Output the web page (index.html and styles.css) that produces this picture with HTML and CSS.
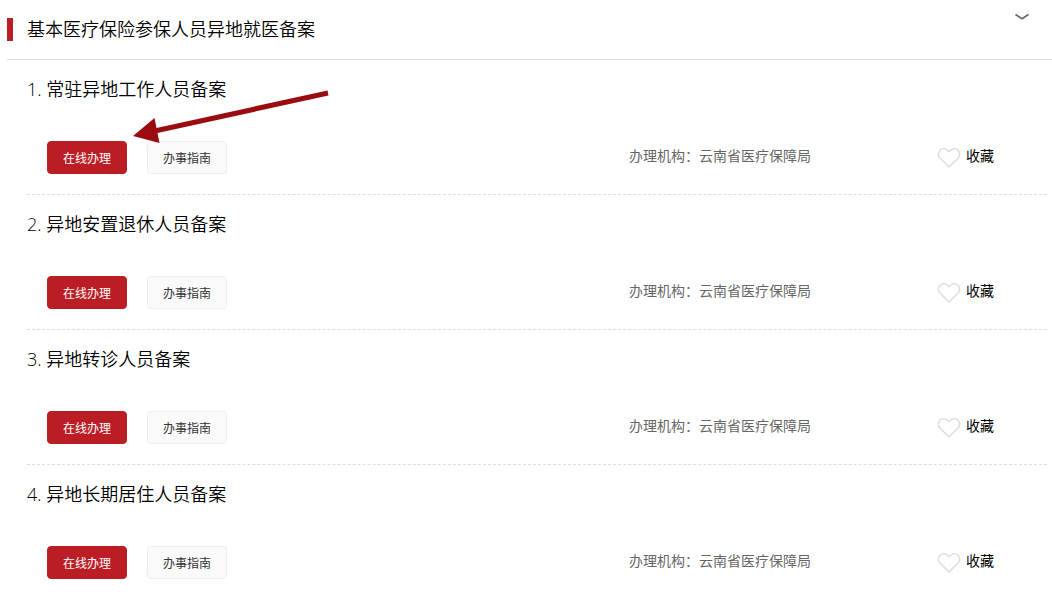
FILE: index.html
```html
<!DOCTYPE html>
<html lang="zh-CN">
<head>
	<meta charset="utf-8">
	<title>基本医疗保险参保人员异地就医备案</title>
	<link rel="stylesheet" href="styles.css">
</head>
<body>
	<div class="panel">
		<div class="head">
			<h2 class="title">基本医疗保险参保人员异地就医备案</h2>
			<button class="toggle" type="button" aria-label="收起">
				<svg width="16" height="8" viewBox="0 0 16 8"><path d="M1.5 1.5 L8 5.800 L14.5 1.5" fill="none" stroke="#666" stroke-width="1.700"/></svg>
			</button>
		</div>

		<div class="list">
			<div class="item">
				<h3 class="name">1. 常驻异地工作人员备案</h3>
				<div class="row">
					<div class="btns">
						<button class="btn primary" type="button">在线办理</button>
						<button class="btn" type="button">办事指南</button>
					</div>
					<div class="org">办理机构：云南省医疗保障局</div>
					<button class="fav" type="button">
						<svg class="heart" width="24" height="22" viewBox="0 0 24 22"><path d="M12 20 L3 11 C1 9 .8 5.500 2.800 3.400 C5 1.200 8.500 1.300 10.500 3.300 L12 4.800 L13.500 3.300 C15.500 1.300 19 1.200 21.200 3.400 C23.200 5.500 23 9 21 11 Z"/></svg>
						<span>收藏</span>
					</button>
				</div>
				<!-- 指向在线办理的箭头 -->
				<svg class="arrow" width="196" height="56" viewBox="0 0 196 56"><path d="M0 46 L21.500 28 L23.500 38 L194.500 0.500 L195.500 5.500 L24.500 43 L26.500 53 Z" fill="#9a0c0f"/></svg>
			</div>

			<div class="item">
				<h3 class="name">2. 异地安置退休人员备案</h3>
				<div class="row">
					<div class="btns">
						<button class="btn primary" type="button">在线办理</button>
						<button class="btn" type="button">办事指南</button>
					</div>
					<div class="org">办理机构：云南省医疗保障局</div>
					<button class="fav" type="button">
						<svg class="heart" width="24" height="22" viewBox="0 0 24 22"><path d="M12 20 L3 11 C1 9 .8 5.500 2.800 3.400 C5 1.200 8.500 1.300 10.500 3.300 L12 4.800 L13.500 3.300 C15.500 1.300 19 1.200 21.200 3.400 C23.200 5.500 23 9 21 11 Z"/></svg>
						<span>收藏</span>
					</button>
				</div>
			</div>

			<div class="item">
				<h3 class="name">3. 异地转诊人员备案</h3>
				<div class="row">
					<div class="btns">
						<button class="btn primary" type="button">在线办理</button>
						<button class="btn" type="button">办事指南</button>
					</div>
					<div class="org">办理机构：云南省医疗保障局</div>
					<button class="fav" type="button">
						<svg class="heart" width="24" height="22" viewBox="0 0 24 22"><path d="M12 20 L3 11 C1 9 .8 5.500 2.800 3.400 C5 1.200 8.500 1.300 10.500 3.300 L12 4.800 L13.500 3.300 C15.500 1.300 19 1.200 21.200 3.400 C23.200 5.500 23 9 21 11 Z"/></svg>
						<span>收藏</span>
					</button>
				</div>
			</div>

			<div class="item">
				<h3 class="name">4. 异地长期居住人员备案</h3>
				<div class="row">
					<div class="btns">
						<button class="btn primary" type="button">在线办理</button>
						<button class="btn" type="button">办事指南</button>
					</div>
					<div class="org">办理机构：云南省医疗保障局</div>
					<button class="fav" type="button">
						<svg class="heart" width="24" height="22" viewBox="0 0 24 22"><path d="M12 20 L3 11 C1 9 .8 5.500 2.800 3.400 C5 1.200 8.500 1.300 10.500 3.300 L12 4.800 L13.500 3.300 C15.500 1.300 19 1.200 21.200 3.400 C23.200 5.500 23 9 21 11 Z"/></svg>
						<span>收藏</span>
					</button>
				</div>
			</div>
		</div>
	</div>
</body>
</html>
```

FILE: styles.css
```css
body{
	margin: 0;
	color: #000;
	background: #fff;
	font-family: "Open Sans", "Noto Sans CJK SC", sans-serif;
	font-size: 14px;
}
button{
	margin: 0;
	padding: 0;
	border: 0;
	background: none;
	color: inherit;
	font: inherit;
	cursor: pointer;
}
svg{
	display: block;
}
.panel{
	padding-left: 7px;
}

.head{
	display: flex;
	justify-content: space-between;
	align-items: flex-start;
	padding: 13px 22px 11px 0;
	border-bottom: 1px solid #ddd;
}
.title{
	margin: 5px 0 7px;
	padding-left: 14px;
	border-left: 6px solid #bb1d25;
	font-size: 18px;
	font-weight: 350;
	line-height: 23px;
}

.list{
	padding: 0 5px 0 20px;
}
.item{
	position: relative;
	padding: 17px 0 20px;
	border-bottom: 1px dashed #ddd;
}
.item:last-child{
	border-bottom: 0;
	padding-bottom: 17px;
}
.name{
	margin: 0 0 40px;
	font-size: 18px;
	font-weight: 350;
	line-height: 24px;
}
.row{
	display: grid;
	grid-template-columns: 1fr 308px 110px;
	align-items: center;
	padding-left: 20px;
}
.btns{
	display: flex;
	gap: 20px;
}
.btn{
	box-sizing: border-box;
	width: 80px;
	height: 33px;
	border: 1px solid #eee;
	border-radius: 4px;
	background: #fafafa;
	color: #333;
	font-size: 12px;
}
.primary{
	border-color: #bb1d25;
	background: #bb1d25;
	color: #fff;
}
.org,
.fav span{
	padding-bottom: 4px;
	line-height: 20px;
}
.org{
	color: #666;
}
.fav{
	display: flex;
	align-items: center;
	gap: 5px;
}
.heart{
	fill: none;
	stroke: #ddd;
	stroke-width: 1.5;
}
.arrow{
	position: absolute;
	top: 30px;
	left: 106px;
}
```
